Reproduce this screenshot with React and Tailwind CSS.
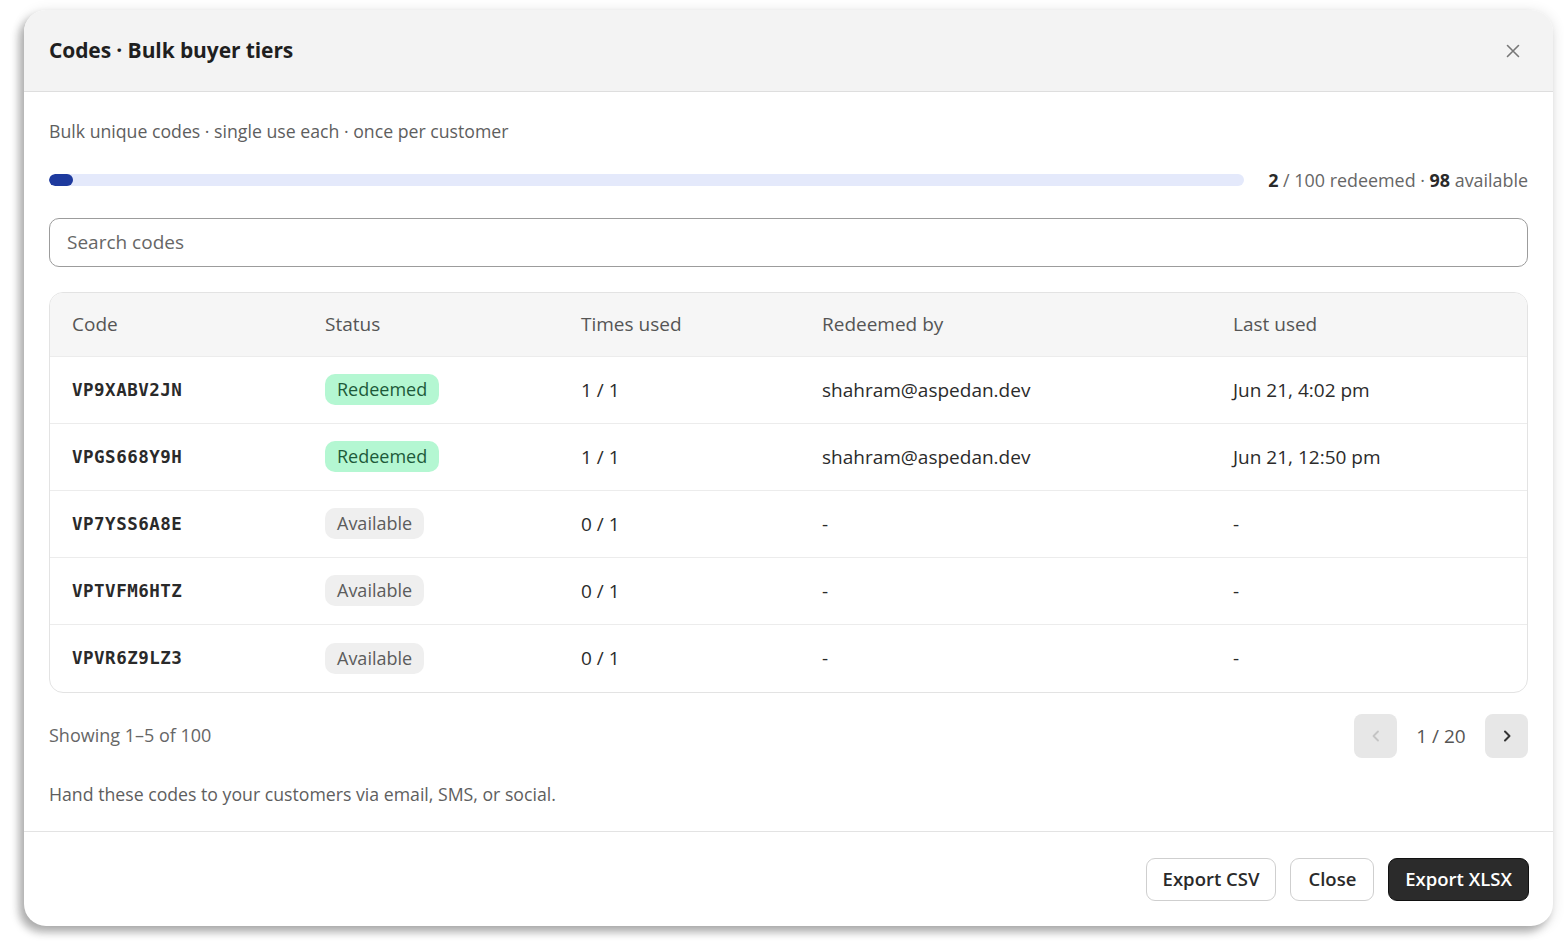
import React, { useState } from 'react';

const rows = [
  { code: 'VP9XABV2JN', status: 'Redeemed', used: '1 / 1', by: 'shahram@aspedan.dev', last: 'Jun 21, 4:02 pm' },
  { code: 'VPGS668Y9H', status: 'Redeemed', used: '1 / 1', by: 'shahram@aspedan.dev', last: 'Jun 21, 12:50 pm' },
  { code: 'VP7YSS6A8E', status: 'Available', used: '0 / 1', by: '-', last: '-' },
  { code: 'VPTVFM6HTZ', status: 'Available', used: '0 / 1', by: '-', last: '-' },
  { code: 'VPVR6Z9LZ3', status: 'Available', used: '0 / 1', by: '-', last: '-' },
];

const StatusBadge = ({ status }) =>
  status === 'Redeemed' ? (
    <span className="inline-flex items-center h-[31px] px-[12px] rounded-[10px] bg-[#b4f7d2] text-[#1d5a3a] text-[18px]">Redeemed</span>
  ) : (
    <span className="inline-flex items-center h-[31px] px-[12px] rounded-[10px] bg-[#efefef] text-[#5c5c5c] text-[18px]">Available</span>
  );

const App = () => {
  const [query, setQuery] = useState('');

  return (
    <div
      className="min-h-[943px] w-[1564px] bg-white pl-[24px] pt-[10px] pr-[11px]"
      style={{ fontFamily: '"Open Sans", "Noto Sans", sans-serif' }}
    >
      <div className="w-[1529px] h-[916px] rounded-[22px] bg-white overflow-hidden shadow-[-5px_6px_8px_rgba(0,0,0,0.28),0_2px_14px_rgba(0,0,0,0.12)] flex flex-col">
        {/* header */}
        <div className="h-[82px] shrink-0 bg-[#f3f3f3] border-b border-[#dedede] flex items-center justify-between pl-[25px] pr-[28px]">
          <h2 className="text-[21px] font-bold text-[#1f1f1f] tracking-[-0.1px]">Codes · Bulk buyer tiers</h2>
          <button className="text-[#777] p-1" aria-label="Close">
            <svg width="16" height="16" viewBox="0 0 16 16" fill="none" stroke="currentColor" strokeWidth="1.6" strokeLinecap="round">
              <path d="M2.5 2.5l11 11M13.5 2.5l-11 11" />
            </svg>
          </button>
        </div>

        {/* body */}
        <div className="px-[25px] pt-[26px] flex-1">
          <p className="text-[17.7px] text-[#5e5e5e] leading-[26px]">Bulk unique codes · single use each · once per customer</p>

          <div className="mt-[23px] flex items-center">
            <div className="w-[1195px] h-[12px] rounded-full bg-[#e4e9fb] overflow-hidden">
              <div className="h-full rounded-full bg-[#1e3a9e]" style={{ width: '2%' }} />
            </div>
            <div className="ml-auto text-[17.9px] text-[#666]">
              <span className="font-bold text-[#2a2a2a]">2</span> / 100 redeemed · <span className="font-bold text-[#2a2a2a]">98</span> available
            </div>
          </div>

          <input
            value={query}
            onChange={(e) => setQuery(e.target.value)}
            placeholder="Search codes"
            className="mt-[24px] w-full h-[49px] rounded-[10px] border border-[#9c9c9c] px-[17px] text-[19px] text-[#333] placeholder:text-[#666] outline-none"
          />

          <div className="mt-[25px] rounded-[14px] border border-[#e3e3e3] overflow-hidden">
            <div className="grid grid-cols-[253px_256px_241px_411px_1fr] h-[64px] items-center bg-[#f6f6f6] pl-[22px] text-[19px] font-medium text-[#555] border-b border-[#ececec]">
              <div>Code</div>
              <div>Status</div>
              <div>Times used</div>
              <div>Redeemed by</div>
              <div>Last used</div>
            </div>
            {rows.map((r, i) => (
              <div
                key={r.code}
                className={`grid grid-cols-[253px_256px_241px_411px_1fr] h-[67px] items-center pl-[22px] text-[19px] text-[#2b2b2b] ${i < rows.length - 1 ? 'border-b border-[#ececec]' : ''}`}
              >
                <div className="font-bold text-[17.5px] tracking-[0.5px] text-[#2a2a2a]" style={{ fontFamily: '"DejaVu Sans Mono", monospace' }}>{r.code}</div>
                <div><StatusBadge status={r.status} /></div>
                <div>{r.used}</div>
                <div>{r.by}</div>
                <div>{r.last}</div>
              </div>
            ))}
          </div>

          <div className="mt-[21px] flex items-center justify-between">
            <span className="text-[18px] text-[#666]">Showing 1–5 of 100</span>
            <div className="flex items-center">
              <button className="w-[43px] h-[44px] rounded-[8px] bg-[#e7e7e7] flex items-center justify-center text-[#c4c4c4]" aria-label="Previous">
                <svg width="14" height="14" viewBox="0 0 14 14" fill="none" stroke="currentColor" strokeWidth="1.8" strokeLinecap="round" strokeLinejoin="round">
                  <path d="M9 2.5L4.5 7 9 11.5" />
                </svg>
              </button>
              <span className="w-[88px] text-center text-[19px] text-[#555]">1 / 20</span>
              <button className="w-[43px] h-[44px] rounded-[8px] bg-[#e7e7e7] flex items-center justify-center text-[#333]" aria-label="Next">
                <svg width="14" height="14" viewBox="0 0 14 14" fill="none" stroke="currentColor" strokeWidth="2" strokeLinecap="round" strokeLinejoin="round">
                  <path d="M5 2.5L9.5 7 5 11.5" />
                </svg>
              </button>
            </div>
          </div>

          <p className="mt-[23px] text-[17.7px] text-[#5e5e5e]">Hand these codes to your customers via email, SMS, or social.</p>
        </div>

        {/* footer */}
        <div className="h-[95px] shrink-0 border-t border-[#e3e3e3] flex items-center justify-end gap-[14px] pr-[24px]">
          <button className="h-[43px] px-[16px] rounded-[9px] border border-[#cfcfcf] bg-white text-[18.5px] font-semibold text-[#2a2a2a]">Export CSV</button>
          <button className="h-[43px] px-[17px] rounded-[9px] border border-[#cfcfcf] bg-white text-[18.5px] font-semibold text-[#2a2a2a]">Close</button>
          <button className="h-[43px] px-[16px] rounded-[9px] border border-[#111] bg-[#2b2b2b] text-[18.5px] font-semibold text-white">Export XLSX</button>
        </div>
      </div>
    </div>
  );
};

export default App;
